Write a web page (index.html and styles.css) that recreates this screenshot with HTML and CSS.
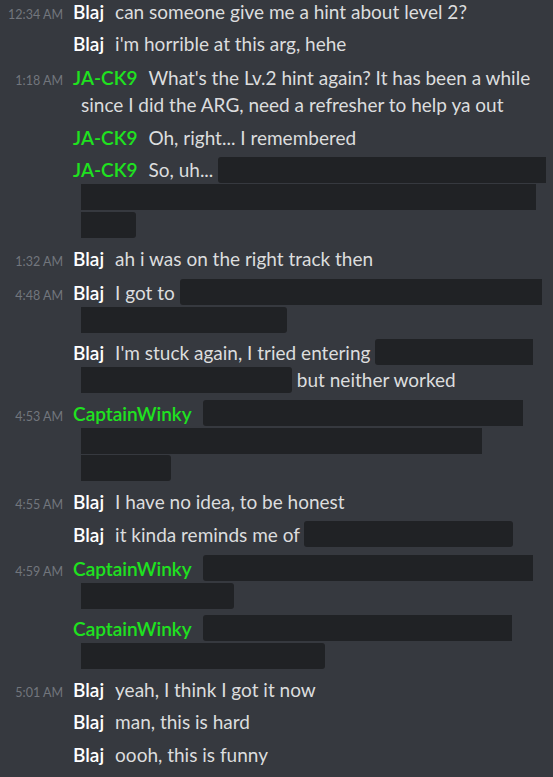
FILE: index.html
```html
<!DOCTYPE html>
<html>
<head>
<meta charset="utf-8">
<title>#arg-help</title>
<link rel="stylesheet" href="styles.css">
</head>
<body>
<div class="chat">

  <div class="msg">
    <span class="time">12:34 AM</span><span class="name">Blaj</span>can someone give me a hint about level 2?
  </div>
  <div class="msg">
    <span class="time"></span><span class="name">Blaj</span>i'm horrible at this arg, hehe
  </div>

  <div class="msg group">
    <span class="time">1:18 AM</span><span class="name green">JA-CK9</span>What's the Lv.2 hint again? It has been a while<br>since I did the ARG, need a refresher to help ya out
  </div>
  <div class="msg">
    <span class="time"></span><span class="name green">JA-CK9</span>Oh, right... I remembered
  </div>
  <div class="msg">
    <span class="time"></span><span class="name green">JA-CK9</span>So, uh... <span class="spoiler head" style="width:328px"></span><br><span class="spoiler" style="width:455px"></span><br><span class="spoiler tail" style="width:55px"></span>
  </div>

  <div class="msg group">
    <span class="time">1:32 AM</span><span class="name">Blaj</span>ah i was on the right track then
  </div>

  <div class="msg group">
    <span class="time">4:48 AM</span><span class="name">Blaj</span>I got to <span class="spoiler head" style="width:362px"></span><br><span class="spoiler tail" style="width:206px"></span>
  </div>
  <div class="msg">
    <span class="time"></span><span class="name">Blaj</span>I'm stuck again, I tried entering <span class="spoiler head" style="width:158px"></span><br><span class="spoiler tail" style="width:211px"></span> but neither worked
  </div>

  <div class="msg group">
    <span class="time">4:53 AM</span><span class="name green">CaptainWinky</span><span class="spoiler head" style="width:320px"></span><br><span class="spoiler" style="width:401px"></span><br><span class="spoiler tail" style="width:90px"></span>
  </div>

  <div class="msg group">
    <span class="time">4:55 AM</span><span class="name">Blaj</span>I have no idea, to be honest
  </div>
  <div class="msg">
    <span class="time"></span><span class="name">Blaj</span>it kinda reminds me of <span class="spoiler whole" style="width:209px"></span>
  </div>

  <div class="msg group">
    <span class="time">4:59 AM</span><span class="name green">CaptainWinky</span><span class="spoiler head" style="width:330px"></span><br><span class="spoiler tail" style="width:153px"></span>
  </div>
  <div class="msg">
    <span class="time"></span><span class="name green">CaptainWinky</span><span class="spoiler head" style="width:309px"></span><br><span class="spoiler tail" style="width:244px"></span>
  </div>

  <div class="msg group">
    <span class="time">5:01 AM</span><span class="name">Blaj</span>yeah, I think I got it now
  </div>
  <div class="msg">
    <span class="time"></span><span class="name">Blaj</span>man, this is hard
  </div>
  <div class="msg">
    <span class="time"></span><span class="name">Blaj</span>oooh, this is funny
  </div>

</div>
</body>
</html>
```
FILE: styles.css
```css
html, body {
  margin: 0;
  height: 100%;
  background-color: #36393f;
}
body {
  font-family: Lato, "Noto Sans", sans-serif;
  font-size: 19px;
  color: #dcddde;
  overflow: hidden;
}
.chat {
  margin-top: -5px;
}
.msg {
  padding: 2.5px 4px 2.5px 81px;
  text-indent: -81px;
  line-height: 27.5px;
  white-space: nowrap;
}
.msg.group {
  margin-top: 1.2px;
}
.time {
  display: inline-block;
  width: 63px;
  margin-right: 10px;
  text-indent: 0;
  text-align: right;
  font-size: 12.5px;
  line-height: 14px;
  color: #72767d;
}
.name {
  margin-right: 11px;
  font-weight: 600;
  color: #ffffff;
}
.name.green {
  color: #1fe21f;
}
.spoiler {
  display: inline-block;
  height: 26px;
  margin-top: 0.5px;
  vertical-align: top;
  background-color: #202225;
}
.spoiler.head {
  border-radius: 3px 0 0 3px;
}
.spoiler.tail {
  border-radius: 0 3px 3px 0;
}
.spoiler.whole {
  border-radius: 3px;
}
```
